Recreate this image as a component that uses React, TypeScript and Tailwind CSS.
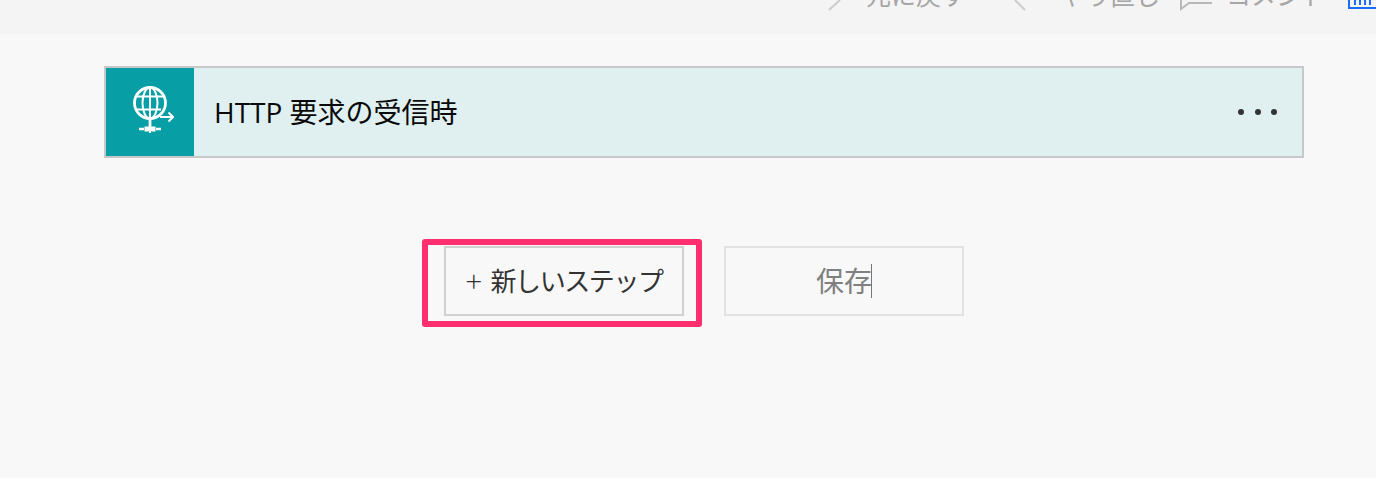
const cjk = { fontFamily: '"Open Sans", "Noto Sans CJK JP", sans-serif' };

function GlobeIcon() {
  return (
    <svg width="41" height="47" viewBox="0 0 41 47" fill="none" stroke="white">
      <circle cx="17" cy="17" r="15.5" strokeWidth="2.8" />
      <ellipse cx="17" cy="17" rx="7.5" ry="15.5" strokeWidth="2" />
      <path d="M3 10.5H31M3 23.5H28" strokeWidth="2" />
      <path d="M17 2V32" strokeWidth="2" />
      <path d="M17 33V41" strokeWidth="2.8" />
      <path d="M6 43H11M23 43H28" strokeWidth="2.6" />
      <rect x="12" y="41" width="10" height="4" fill="white" strokeWidth="1" />
      <path d="M17 45V47" strokeWidth="2" />
      <path d="M27 31H40M35.5 26.5L40 31L35.5 35.5" strokeWidth="2" />
    </svg>
  );
}

export default function App() {
  return (
    <div className="w-[1376px] h-[478px] overflow-hidden bg-[#f8f8f8] flex flex-col" style={cjk}>
      <div className="h-[34px] shrink-0 bg-[#f4f4f4] overflow-hidden flex items-end pl-[826px] pb-[22px] text-[25px] leading-[34px] text-[#a6a6a6] whitespace-nowrap">
        <svg width="40" height="34" viewBox="0 0 40 34" fill="none" stroke="#cccccc" strokeWidth="2" className="shrink-0">
          <path d="M14 22L3 32" />
        </svg>
        <span className="w-[146px] shrink-0">元に戻す</span>
        <svg width="48" height="34" viewBox="0 0 48 34" fill="none" stroke="#cccccc" strokeWidth="2" className="shrink-0">
          <path d="M3 22L13 32" />
        </svg>
        <span className="w-[120px] shrink-0">やり直し</span>
        <svg width="46" height="34" viewBox="0 0 46 34" fill="none" stroke="#b8b8b8" strokeWidth="2" className="shrink-0">
          <path d="M1 22V31L9 25H32" />
        </svg>
        <span className="w-[122px] shrink-0">コメント</span>
        <svg width="28" height="34" viewBox="0 0 28 34" fill="none" stroke="#1a6cff" strokeWidth="2" className="shrink-0">
          <path d="M1 22V30H28M7 22V27M12 22V27M17 22V27M22 22V27" />
        </svg>
      </div>

      <div className="pl-[104px] pr-[72px] pt-[32px] flex flex-col">
        <div className="h-[92px] border-2 border-[#c8c8c8] bg-[#e0f0f1] flex items-center">
          <div className="w-[88px] h-full bg-[#079ea6] flex items-center justify-center shrink-0 pl-[7px] pb-[5px]">
            <GlobeIcon />
          </div>
          <div className="flex-1 pl-[20px] text-[28px] text-[#0a0a0a]">HTTP 要求の受信時</div>
          <div className="flex items-center gap-[10.5px] pr-[25px]">
            <span className="w-[6px] h-[6px] rounded-full bg-[#333333]" />
            <span className="w-[6px] h-[6px] rounded-full bg-[#333333]" />
            <span className="w-[6px] h-[6px] rounded-full bg-[#333333]" />
          </div>
        </div>

        <div className="mt-[88px] flex justify-center items-center">
          <div className="relative flex items-center gap-[40px]">
            <button className="w-[240px] h-[70px] border-2 border-[#d0d0d0] text-[26px] text-[#333333] flex items-center justify-center whitespace-nowrap">
              <span className="text-[30px] font-light leading-none mr-[8px]">+</span>
              <span className="tracking-[-1.4px]">新しいステップ</span>
            </button>
            <button className="w-[240px] h-[70px] border-2 border-[#e2e2e2] text-[28px] text-[#808080] flex items-center justify-center">
              <span>保存</span>
              <span className="w-[1px] h-[34px] bg-[#777777] -ml-[1px]" />
            </button>
            <div className="absolute left-[-22px] top-[-7px] w-[280px] h-[88px] border-[6px] border-[#ff2f6f] rounded-[3px]" />
          </div>
        </div>
      </div>
    </div>
  );
}
